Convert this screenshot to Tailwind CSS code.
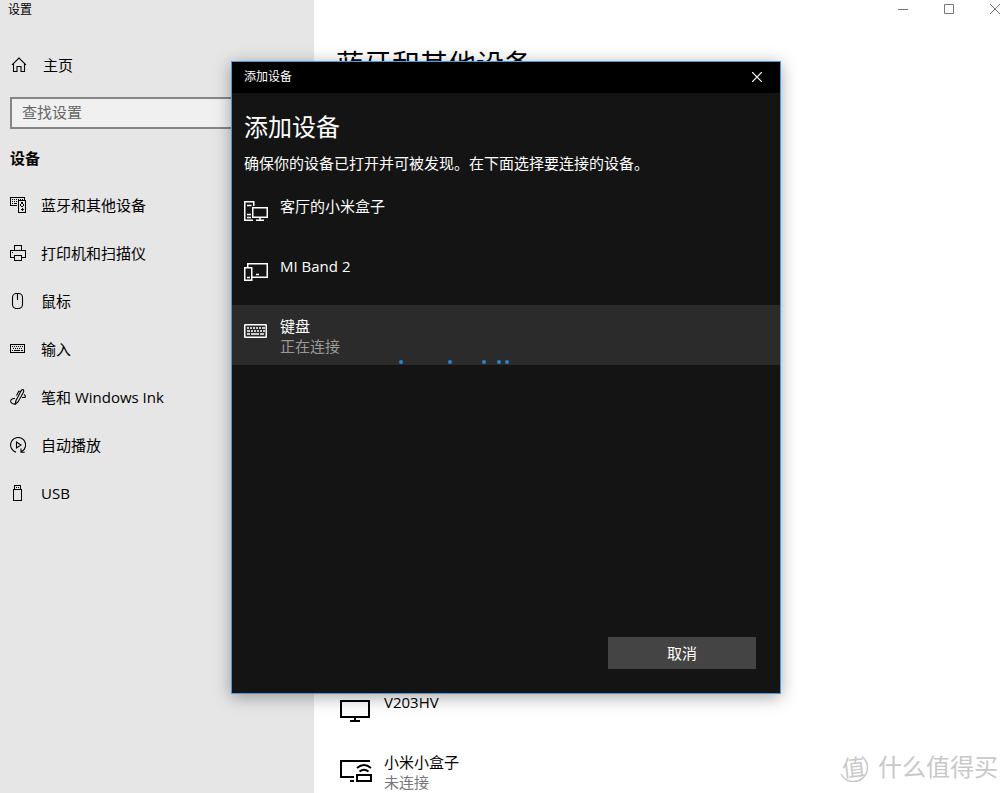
<!DOCTYPE html>
<html lang="zh-CN">
<head>
<meta charset="utf-8">
<meta name="viewport" content="width=device-width, initial-scale=1">
<title>设置</title>
<script src="https://cdn.jsdelivr.net/npm/@tailwindcss/browser@4"></script>
</head>
<body class="relative flex h-screen overflow-hidden bg-white font-['Open_Sans','Noto_Sans_CJK_SC',sans-serif] text-[15px] leading-5 text-black">

<aside class="flex w-[314px] shrink-0 flex-col bg-[#e6e6e6]">
  <div class="px-2 text-xs leading-5">设置</div>
  <a href="#" class="mt-[21px] flex h-12 items-center gap-4 pl-[11px]">
    <svg class="size-4" viewBox="0 0 16 16" fill="none" stroke="currentColor" stroke-width="1.1"><path d="M1 7.8 8 1l7 6.800M2.500 6.500v8h3.500v-5h4v5h3.500v-8"/></svg>
    主页
  </a>
  <div class="mt-2 px-[10px]">
    <input type="text" aria-label="查找设置" placeholder="查找设置" class="block h-8 w-full border-2 border-[#868686] bg-[#f0f0f0] px-[10px] pb-[2px] outline-none placeholder:text-[#666]">
  </div>
  <h2 class="mt-[19px] px-[10px] font-bold">设备</h2>
  <nav class="mt-[13px] flex flex-col">
    <a href="#" class="flex h-12 items-center gap-[15px] pl-[10px]">
      <svg class="size-4" viewBox="0 0 16 16" fill="none" stroke="currentColor" shape-rendering="crispEdges"><path d="M7 8.500H.5v-8h14V3M2 2.500h1m1 0h1m1 0h1m1 0h1m1 0h1m1 0h1M2 4.500h1m1 0h1m1 0h1M2 6.500h1m1 0h3M8.500 3.500h7v12h-7zM11 6.500h2M10.500 7v2m3-2v2M11 9.500h2m-1 1.500v3m-1-1.500h3M11 5.500h2"/></svg>
      蓝牙和其他设备
    </a>
    <a href="#" class="flex h-12 items-center gap-[15px] pl-[10px]">
      <svg class="size-4" viewBox="0 0 16 16" fill="none" stroke="currentColor" shape-rendering="crispEdges"><path d="M4.500 5.500v-5h7v5M4.500 12.500h-4v-7h15v7h-4M4.500 10.500h7v5h-7zM2 7.500h1"/></svg>
      打印机和扫描仪
    </a>
    <a href="#" class="flex h-12 items-center gap-[15px] pl-[10px]">
      <svg class="size-4" viewBox="0 0 16 16" fill="none" stroke="currentColor" stroke-width="1.1"><rect x="2.500" y=".5" width="10" height="15" rx="4"/><path d="M7.500 1v6"/></svg>
      鼠标
    </a>
    <a href="#" class="flex h-12 items-center gap-[15px] pl-[10px]">
      <svg class="size-4" viewBox="0 0 16 16" fill="none" stroke="currentColor" shape-rendering="crispEdges"><path d="M.5 3.500h14v8H.5zM2 5.500h1m1 0h1m1 0h1m1 0h1m1 0h1m1 0h1M3 7.500h1m1 0h1m1 0h1m1 0h1m1 0h1M2 9.500h1m1 0h6m1 0h2"/></svg>
      输入
    </a>
    <a href="#" class="flex h-12 items-center gap-[15px] pl-[10px]">
      <svg class="size-4" viewBox="0 0 16 16" fill="none" stroke="currentColor" stroke-width="1.100"><path d="M5 15.500 6 11.500 11 2Q12 0 13.200.8 14.200 1.600 13.300 3.500L8 13zM10.800 2.300 8.800 2.300 6.500 6.500M5 9.500C-.5 9.200-.7 14.500 4 15H5M12 8.500 15 8.500Q16 6.500 14 5.500"/></svg>
      笔和 Windows Ink
    </a>
    <a href="#" class="flex h-12 items-center gap-[15px] pl-[10px]">
      <svg class="size-4" viewBox="0 0 16 16" fill="none" stroke="currentColor" stroke-width="1.100"><path d="M6 15.200A7.500 7.500 0 1 1 11.500 14.700M6.500 5v6l4.500-3zM11 11.500v3.700h3.700"/></svg>
      自动播放
    </a>
    <a href="#" class="flex h-12 items-center gap-[15px] pl-[10px]">
      <svg class="size-4" viewBox="0 0 16 16" fill="none" stroke="currentColor" shape-rendering="crispEdges"><path d="M4.500 4.500v-4h6v4M3.500 4.500h8v11h-8zM6 2.500h1m1 0h1"/></svg>
      USB
    </a>
  </nav>
</aside>

<main class="flex min-w-0 flex-1 flex-col">
  <div class="flex justify-end gap-9 pt-1 pr-[6px] text-[#777]">
    <button type="button" aria-label="最小化"><svg class="block size-[10px]" viewBox="0 0 10 10" stroke="currentColor"><path d="M0 5.500h10"/></svg></button>
    <button type="button" aria-label="最大化"><svg class="block size-[10px]" viewBox="0 0 10 10" fill="none" stroke="currentColor"><path d="M.5.500h9v9h-9z"/></svg></button>
    <button type="button" aria-label="关闭"><svg class="block size-[10px]" viewBox="0 0 10 10" stroke="currentColor"><path d="m0 0 10 10M10 0 0 10"/></svg></button>
  </div>
  <h1 class="mt-8 pl-[22px] text-[28px] leading-9">蓝牙和其他设备</h1>
  <ul class="mt-[600px] pl-[26px]">
    <li class="flex h-[60px] gap-3 pt-[10px]">
      <svg class="mt-1 size-8 shrink-0" viewBox="0 0 32 32" fill="none" stroke="currentColor" stroke-width="2" shape-rendering="crispEdges"><path d="M1 5h28v16H1zM15 21v3M10 25h10"/></svg>
      <span>V203HV</span>
    </li>
    <li class="flex h-[60px] gap-3 pt-[10px]">
      <svg class="mt-1 size-8 shrink-0" viewBox="0 0 32 32" fill="none" stroke="currentColor" stroke-width="2"><path d="M30 5H1v16h13M10 25h4M17 19h14v6H17z" shape-rendering="crispEdges"/><path d="M17 12q7-6 14 0M19.500 15.500q4.500-3.500 9 0"/></svg>
      <div><div>小米小盒子</div><div class="text-[#777]">未连接</div></div>
    </li>
  </ul>
</main>

<section role="dialog" aria-labelledby="dialog-title" class="absolute top-[61px] left-[231px] flex h-[633px] w-[550px] flex-col border border-[#4a9ae0] bg-[#141414] text-white shadow-[0_3px_16px_rgba(0,0,0,0.35)]">
  <header class="flex h-[31px] shrink-0 items-center justify-between bg-black pr-[18px] pb-[2px] pl-3 text-xs">
    <span>添加设备</span>
    <button type="button" aria-label="关闭"><svg class="block size-[10px]" viewBox="0 0 10 10" stroke="currentColor" stroke-width="1.200"><path d="m0 0 10 10M10 0 0 10"/></svg></button>
  </header>
  <h2 id="dialog-title" class="mt-[18px] px-3 text-2xl leading-8">添加设备</h2>
  <p class="mt-[10px] px-3">确保你的设备已打开并可被发现。在下面选择要连接的设备。</p>
  <ul class="mt-3">
    <li class="flex h-[60px] gap-3 px-3 pt-[11px]">
      <svg class="mt-1 size-6 shrink-0" viewBox="0 0 24 24" fill="none" stroke="currentColor" stroke-width="1.500"><path d="M9 20.250H.75V1.750h9V6M8.750 7.750h14.500v9.500H8.750z"/><path d="M3 5.500h4.500M3 14.500h4M3 17.500h4M16 17v3M12 20.250h8"/></svg>
      <span>客厅的小米盒子</span>
    </li>
    <li class="flex h-[60px] gap-3 px-3 pt-[11px]">
      <svg class="mt-1 size-6 shrink-0" viewBox="0 0 24 24" fill="none" stroke="currentColor" stroke-width="1.500"><path d="M3.750 7V3.750h19.500v13.500H8M.75 7.750h7v12.500h-7zM12 14.500h3M3 17.500h3"/></svg>
      <span>MI Band 2</span>
    </li>
    <li class="relative flex h-[60px] gap-3 bg-[#2b2b2b] px-3 pt-[11px]">
      <svg class="mt-1 size-6 shrink-0" viewBox="0 0 24 24" fill="none" stroke="currentColor" stroke-width="1.500"><rect x=".75" y="4.750" width="21.500" height="12.500" rx=".5"/><path d="M3 8h2m1 0h2m1 0h2m1 0h2m1 0h2m1 0h3M3 11h3m1 0h2m1 0h2m1 0h2m1 0h2m1 0h2M3 14h3m1 0h8m1 0h4"/></svg>
      <div><div>键盘</div><div class="text-[#999]">正在连接</div></div>
      <svg class="absolute bottom-0 left-[166px] h-[6px] w-[112px]" viewBox="0 0 112 6" fill="#2d82c8" aria-hidden="true"><circle cx="3" cy="3" r="2"/><circle cx="52" cy="3" r="2"/><circle cx="86" cy="3" r="2"/><circle cx="101" cy="3" r="2"/><circle cx="109" cy="3" r="2"/></svg>
    </li>
  </ul>
  <button type="button" class="mt-auto mr-6 mb-6 h-8 w-[148px] self-end bg-[#444]">取消</button>
</section>

<div class="absolute right-2 bottom-[10px] flex items-center gap-[10px] text-2xl leading-8 text-[#c8c8c8]">
  <div class="relative flex size-[30px] items-center justify-center text-[23px]">
    <svg class="absolute inset-0 size-[30px]" viewBox="0 0 30 30" fill="none" stroke="currentColor" stroke-width="1.500" aria-hidden="true"><path d="M24 4.500A14 14 0 1 1 3 22"/></svg>
    <span class="-rotate-6">值</span>
  </div>
  <span>什么值得买</span>
</div>
</body>
</html>
